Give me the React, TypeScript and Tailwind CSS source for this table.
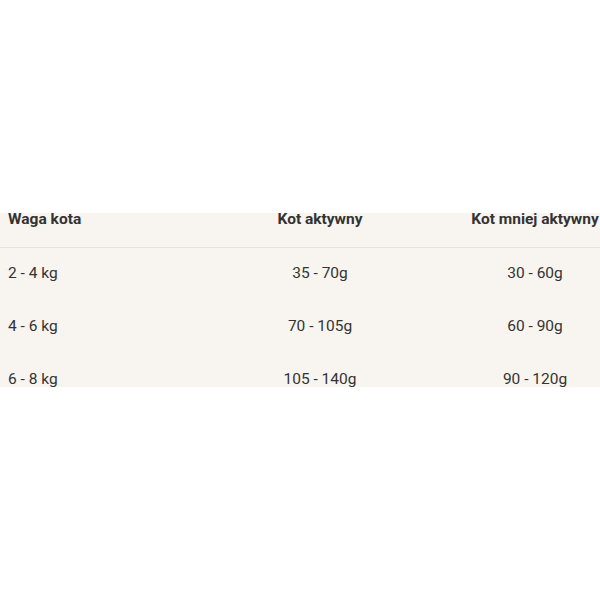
const rows = [
  ["2 - 4 kg", "35 - 70g", "30 - 60g"],
  ["4 - 6 kg", "70 - 105g", "60 - 90g"],
  ["6 - 8 kg", "105 - 140g", "90 - 120g"],
];

export default function App() {
  return (
    <div className="h-[600px] w-[600px] overflow-hidden bg-white font-['Roboto',sans-serif] text-[#333333]">
      <div className="mt-[213px] h-[174px] overflow-hidden bg-[#f8f5f0]">
        {/* Header */}
        <div className="grid grid-cols-[170px_300px_130px] border-b border-[#e7e3dc] pb-[22px] text-[15.5px] font-bold leading-[12px]">
          <div className="pl-2">Waga kota</div>
          <div className="text-center">Kot aktywny</div>
          <div className="whitespace-nowrap text-center">Kot mniej aktywny</div>
        </div>
        {/* Rows */}
        {rows.map((r) => (
          <div key={r[0]} className="grid grid-cols-[170px_300px_130px] pt-[15px] pb-[17px] text-[15.5px] leading-[21px]">
            <div className="pl-2">{r[0]}</div>
            <div className="text-center">{r[1]}</div>
            <div className="text-center">{r[2]}</div>
          </div>
        ))}
      </div>
    </div>
  );
}
